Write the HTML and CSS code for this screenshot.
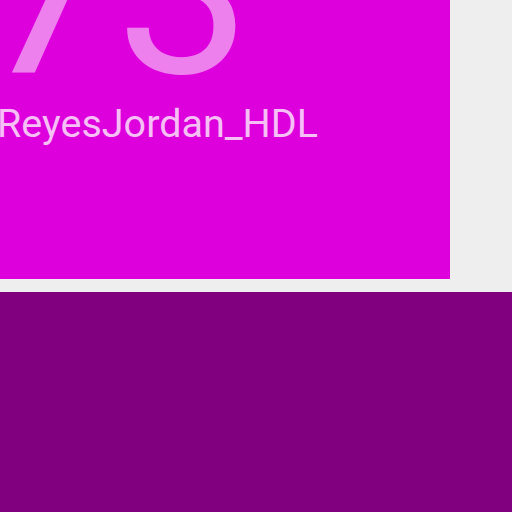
FILE: index.html
```html
<!DOCTYPE html>
<html>
<head>
<meta charset="utf-8">
<link rel="stylesheet" href="styles.css">
</head>
<body>
<div class="page">
  <div class="card">
    <div class="score">73</div>
    <div class="name">ReyesJordan_HDL</div>
  </div>
  <div class="panel"></div>
</div>
</body>
</html>
```
FILE: styles.css
```css
html, body {
  margin: 0;
  padding: 0;
  background: #eeeeee;
  font-family: Roboto, "Noto Sans", sans-serif;
}
.page {
  display: flex;
  flex-direction: column;
  gap: 12.6px;
  width: 512px;
  height: 512px;
  overflow: hidden;
}
.card {
  width: 450px;
  height: 279px;
  flex: none;
  background: #dd00dd;
  overflow: hidden;
  display: flex;
  flex-direction: column;
}
.score {
  font-size: 240px;
  line-height: 240px;
  margin-top: -129px;
  margin-left: -19px;
  color: rgba(255, 255, 255, 0.5);
  white-space: nowrap;
}
.name {
  font-size: 39.5px;
  line-height: 40px;
  margin-top: -7px;
  margin-left: -3px;
  color: rgba(255, 255, 255, 0.75);
  white-space: nowrap;
}
.panel {
  flex: 1;
  background: #800080;
}
```
